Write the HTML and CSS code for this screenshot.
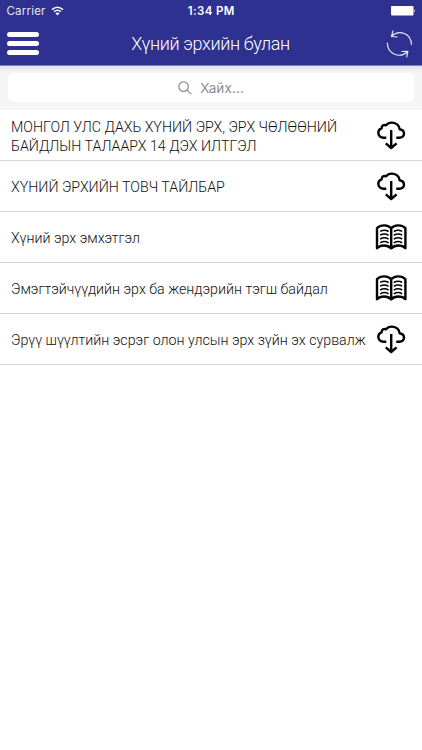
FILE: index.html
```
<!DOCTYPE html>
<html lang="mn">
<head>
<meta charset="utf-8">
<title>Хүний эрхийн булан</title>
<link rel="stylesheet" href="styles.css">
</head>
<body>
<svg class="defs" aria-hidden="true">
  <symbol id="cloud" viewBox="0 0 32 30">
    <path d="M11.3 17.7H8.8C5.4 17.7 3.3 15.6 3.3 12.8C3.3 10.5 4.7 8.9 6.6 8.3C6.4 5.8 8.6 4.3 11 5.3C12.5 3.4 14.6 2.5 17.2 2.6C21.4 2.8 24.4 5.7 24.6 9.2C27.2 9.6 29 11.3 29 13.6C29 16.1 27 17.7 24.4 17.7H21.3"/>
    <path d="M16.2 10V27.8M10.8 23.4L16.2 28L21.6 23.4"/>
  </symbol>
  <symbol id="book" viewBox="0 0 32 30">
    <path d="M16.2 6.3C13.2 2.6 6 2.2 2 6.2V26.2C5.5 22.6 12.5 22.4 16.2 26.4C19.9 22.4 26.9 22.6 30.4 26.2V6.2C26.4 2.2 19.2 2.6 16.2 6.3V26.4"/>
    <path class="lines" d="M5.2 9.4Q9.5 6.9 13.6 9.5M5.2 13.2Q9.5 10.7 13.6 13.3M5.2 17Q9.5 14.5 13.6 17.1M5.2 20.8Q9.5 18.3 13.6 20.9M18.8 9.5Q23 6.9 27.2 9.4M18.8 13.3Q23 10.7 27.2 13.2M18.8 17.1Q23 14.5 27.2 17M18.8 20.9Q23 18.3 27.2 20.8"/>
  </symbol>
</svg>
<header class="header">
  <div class="status">
    <div class="carrier"><span>Carrier</span>
      <svg class="wifi" viewBox="0 0 13 10"><path d="M1 3.6Q6.5-1.2 12 3.6M3 5.8Q6.5 2.8 10 5.8"/><path class="dot" d="M4.5 7.3Q6.5 5.7 8.5 7.3L6.5 9.4Z"/></svg>
    </div>
    <time class="clock">1:34 PM</time>
    <svg class="battery" viewBox="0 0 25 10"><rect width="22.5" height="9.5" rx="1"/><path d="M23.3 3Q25 4.8 23.3 6.6Z"/></svg>
  </div>
  <div class="bar">
    <div class="menu"><i></i><i></i><i></i></div>
    <h1 class="title">Хүний эрхийн булан</h1>
    <svg class="refresh" viewBox="0 0 28 28"><path d="M5.7 6.1C13-0.9 25.3 3.3 25.5 14.8M7 .7L5.5 6.5L11.5 7M1.3 12.8C1.6 24.5 14 28.7 21.5 21.7M15.5 21.5L21.8 21.4L20.6 27.3"/></svg>
  </div>
</header>
<div class="search-area">
  <div class="search">
    <svg class="glass" viewBox="0 0 14 14"><circle cx="5.6" cy="5.6" r="4.8"/><path d="M9.2 9.2L13.2 13.2"/></svg>
    <span class="placeholder">Хайх...</span>
  </div>
</div>
<main>
  <div class="row"><p>МОНГОЛ УЛС ДАХЬ ХҮНИЙ ЭРХ, ЭРХ ЧӨЛӨӨНИЙ<br>БАЙДЛЫН ТАЛААРХ 14 ДЭХ ИЛТГЭЛ</p><svg class="icon"><use href="#cloud"/></svg></div>
  <div class="row"><p>ХҮНИЙ ЭРХИЙН ТОВЧ ТАЙЛБАР</p><svg class="icon"><use href="#cloud"/></svg></div>
  <div class="row"><p>Хүний эрх эмхэтгэл</p><svg class="icon"><use href="#book"/></svg></div>
  <div class="row"><p>Эмэгтэйчүүдийн эрх ба жендэрийн тэгш байдал</p><svg class="icon"><use href="#book"/></svg></div>
  <div class="row"><p>Эрүү шүүлтийн эсрэг олон улсын эрх зүйн эх сурвалж</p><svg class="icon"><use href="#cloud"/></svg></div>
</main>
</body>
</html>
```
FILE: styles.css
```
* { box-sizing: border-box; }
body { margin: 0; background: #fff; font-family: Roboto, sans-serif; color: #111; }
svg { display: block; flex: none; }
.defs { display: none; }
.header { height: 66px; background: #2e318f; color: #fff; border-bottom: 1px solid #7d7fb9; }
.status { height: 22px; padding: 0 6px 0 6.5px; display: grid; grid-template-columns: 1fr auto 1fr; align-items: center; font-family: Inter, sans-serif; }
.carrier { display: flex; gap: 5px; align-items: center; font-size: 11.5px; letter-spacing: .2px; color: #e6e6f5; }
.wifi { width: 13px; height: 10px; fill: none; stroke: #fff; stroke-width: 1.5; }
.wifi .dot { fill: #fff; stroke: none; }
.clock { font-size: 11.5px; font-weight: 600; letter-spacing: .4px; }
.battery { width: 25px; height: 10px; fill: #fff; justify-self: end; }
.bar { height: 43px; padding: 0 9px 0 7px; display: grid; grid-template-columns: 32px 1fr 27px; align-items: center; }
.menu { display: grid; gap: 4px; }
.menu i { height: 5px; border-radius: 2.5px; background: #fff; }
.title { margin: 0; padding-right: 4px; text-align: center; font-size: 18px; letter-spacing: -.38px; line-height: 22px; font-weight: 300; white-space: nowrap; }
.refresh { width: 28px; height: 28px; fill: none; stroke: #e9e9fb; stroke-width: 1.2; }
.search-area { height: 44px; padding: 7px 8px 8px; background: linear-gradient(#e2e2ea, #f5f5f5 6px); }
.search { height: 29px; border-radius: 5px; background: #fff; display: flex; align-items: center; justify-content: center; gap: 8px; color: #8e8e93; font-size: 14px; }
.placeholder { font-family: Inter, sans-serif; font-size: 13.5px; letter-spacing: .1px; }
.glass { width: 14px; height: 14px; fill: none; stroke: #8e8e93; stroke-width: 1.2; }
.row { height: 51px; padding: 0 15px 0 11px; display: flex; align-items: center; justify-content: space-between; border-bottom: 1px solid #d4d4d4; }
.row p { margin: 0; padding-top: 2px; font-size: 14.22px; line-height: 19px; font-weight: 300; white-space: nowrap; }
.row:first-child p { padding-top: 3px; }
.icon { width: 32px; height: 30px; fill: none; stroke: #000; stroke-width: 2.4; stroke-linecap: butt; stroke-linejoin: round; }
.lines { stroke-width: 1.5; }
```
